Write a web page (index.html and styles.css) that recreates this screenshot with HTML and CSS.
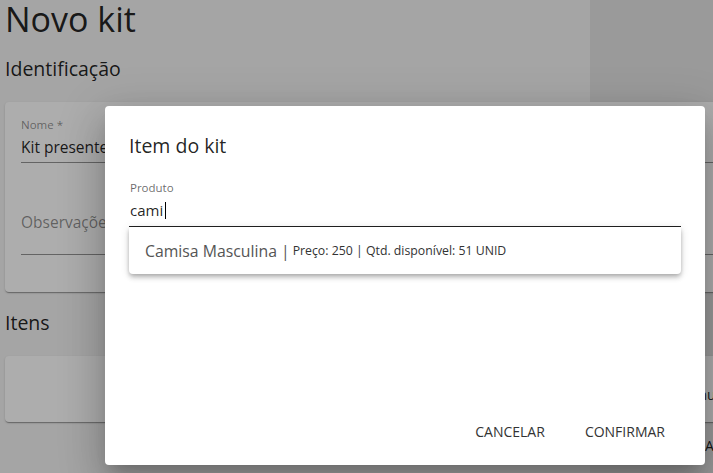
FILE: index.html
```html
<!DOCTYPE html>
<html lang="pt-BR">
<head>
<meta charset="utf-8">
<title>Novo kit</title>
<link rel="stylesheet" href="styles.css">
</head>
<body>
<div class="page">
  <h1 class="page-title">Novo kit</h1>
  <h2 class="section-title">Identificação</h2>
  <div class="card id-card">
    <div class="field name-field">
      <div class="field-label">Nome *</div>
      <div class="field-value">Kit presente de aniversário</div>
    </div>
    <div class="field obs-field">
      <div class="field-value placeholder">Observações</div>
    </div>
  </div>
  <h2 class="section-title items-title">Itens</h2>
  <div class="card items-card">
    <span class="items-text">Menu</span>
  </div>
  <div class="page-actions">
    <span class="page-btn">ADICIONAR ITEM</span>
  </div>
</div>

<div class="backdrop"></div>

<div class="dialog">
  <h2 class="dialog-title">Item do kit</h2>
  <div class="ac-field">
    <div class="ac-label">Produto</div>
    <div class="ac-input">cami<span class="caret"></span></div>
  </div>
  <div class="ac-panel">
    <div class="ac-option"><span class="opt-name">Camisa Masculina</span><span class="opt-sep">|</span><span class="opt-meta">Preço: 250 | Qtd. disponível: 51 UNID</span></div>
  </div>
  <div class="dialog-actions">
    <button class="text-btn">CANCELAR</button>
    <button class="text-btn">CONFIRMAR</button>
  </div>
</div>
</body>
</html>
```

FILE: styles.css
```css
html, body {
  margin: 0;
  height: 100%;
}
body {
  font-family: "Open Sans", "Noto Sans", sans-serif;
  color: rgba(0, 0, 0, 0.87);
  background: linear-gradient(to right, #f4f4f4 0, #f4f4f4 590px, #e3e3e3 590px, #e3e3e3 100%);
  overflow: hidden;
  position: relative;
}
.page {
  width: 820px;
  padding: 2px 0 0 5px;
}
.page-title {
  margin: 0;
  font-size: 34px;
  line-height: 34px;
  font-weight: 400;
}
.section-title {
  margin: 19px 0 19px 0;
  font-size: 19.5px;
  line-height: 28px;
  font-weight: 400;
}
.items-title {
  margin: 17px 0 19px 0;
}
.card {
  background: #fff;
  border-radius: 4px;
  box-shadow: 0 2px 1px -1px rgba(0,0,0,.2), 0 1px 1px 0 rgba(0,0,0,.14), 0 1px 3px 0 rgba(0,0,0,.12);
}
.id-card {
  padding: 16px 16px 37px 16px;
}
.field {
  border-bottom: 1px solid rgba(0, 0, 0, 0.42);
}
.field-label {
  font-size: 11.5px;
  line-height: 14px;
  color: rgba(0, 0, 0, 0.45);
  margin-bottom: 4px;
}
.field-value {
  font-size: 15.5px;
  line-height: 22px;
  padding-bottom: 4px;
  white-space: nowrap;
}
.obs-field {
  margin-top: 48px;
}
.obs-field .field-value {
  padding-bottom: 21px;
}
.placeholder {
  color: rgba(0, 0, 0, 0.45);
}
.items-card {
  height: 66px;
  display: flex;
  align-items: center;
}
.items-text {
  margin-left: 673px;
  font-size: 14px;
  padding-top: 10px;
}
.page-actions {
  padding: 14px 0 0 700px;
  font-size: 14px;
}
.backdrop {
  position: absolute;
  inset: 0;
  background: rgba(0, 0, 0, 0.32);
}
.dialog {
  position: absolute;
  left: 105px;
  top: 106px;
  width: 600px;
  height: 359px;
  box-sizing: border-box;
  padding: 24px 24px 16px 24px;
  background: #fff;
  border-radius: 4px;
  box-shadow: 0 11px 15px -7px rgba(0,0,0,.2), 0 24px 38px 3px rgba(0,0,0,.14), 0 9px 46px 8px rgba(0,0,0,.12);
  display: flex;
  flex-direction: column;
}
.dialog-title {
  margin: 0 0 19px 0;
  font-size: 19.5px;
  line-height: 32px;
  font-weight: 400;
}
.ac-field {
  border-bottom: 1px solid #222;
  padding-bottom: 5px;
}
.ac-label {
  font-size: 11.5px;
  line-height: 14px;
  color: rgba(0, 0, 0, 0.6);
  margin-left: 1px;
}
.ac-input {
  font-size: 15px;
  line-height: 22px;
  margin-top: 4px;
  margin-left: 1px;
  display: flex;
  align-items: center;
}
.caret {
  display: inline-block;
  width: 1px;
  height: 17px;
  background: #000;
  margin-left: 2px;
}
.ac-panel {
  background: #fff;
  border-radius: 0 0 4px 4px;
  box-shadow: 0 2px 4px -1px rgba(0,0,0,.2), 0 4px 5px 0 rgba(0,0,0,.14), 0 1px 10px 0 rgba(0,0,0,.12);
}
.ac-option {
  height: 47px;
  display: flex;
  align-items: center;
  padding: 0 16px;
  white-space: nowrap;
  color: #444;
}
.opt-name {
  font-size: 15.8px;
  color: #555;
}
.opt-sep {
  font-size: 15.8px;
  color: #555;
  margin: 0 3px 0 4px;
}
.opt-meta {
  font-size: 12.3px;
  color: #333;
}
.dialog-actions {
  margin-top: auto;
  display: flex;
  justify-content: flex-end;
  gap: 8px;
}
.text-btn {
  font-family: inherit;
  font-size: 14px;
  height: 36px;
  padding: 0 16px;
  border: 0;
  background: transparent;
  color: #333;
  cursor: pointer;
}
```
